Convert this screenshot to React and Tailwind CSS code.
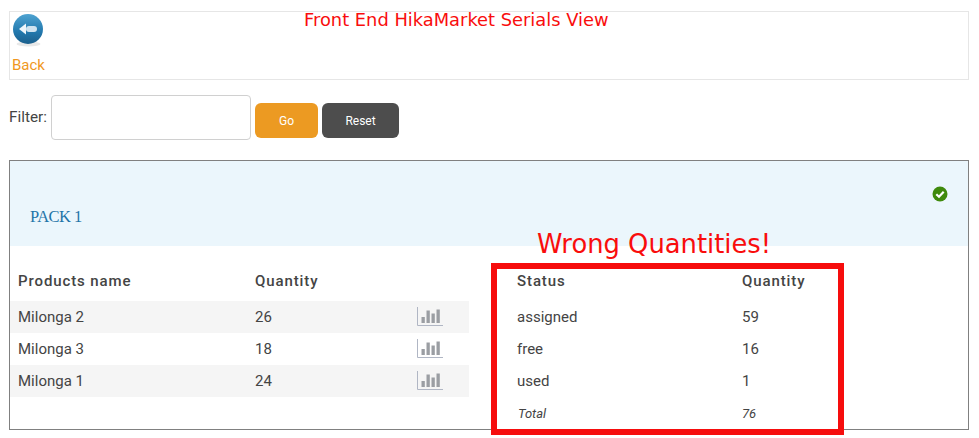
const font = "font-['Roboto',sans-serif]";

function BackIcon() {
  return (
    <svg width="32" height="34" viewBox="0 0 32 34" className="block">
      <defs>
        <linearGradient id="backFill" x1="0" y1="0" x2="0" y2="1">
          <stop offset="0" stopColor="#4fa3d1" />
          <stop offset="0.6" stopColor="#2278ad" />
          <stop offset="1" stopColor="#1b5f8c" />
        </linearGradient>
      </defs>
      <ellipse cx="15.5" cy="30" rx="12" ry="2.5" fill="#e8e8e8" />
      <circle cx="15" cy="15" r="15" fill="url(#backFill)" />
      <path d="M6 15 L13 9.5 L13 20.5 Z" fill="#eef6fb" />
      <rect x="13" y="12" width="11" height="6" rx="3" fill="#cfe3f0" />
    </svg>
  );
}

function ChartIcon() {
  return (
    <svg width="26" height="19" viewBox="0 0 26 19" className="-mt-[2px] block">
      <path d="M0.5 0 V18.5 H26" fill="none" stroke="#b0b6c4" strokeWidth="1" />
      <rect x="4.5" y="10" width="3.3" height="6" fill="#9b9ea3" />
      <rect x="9.5" y="3.5" width="3.3" height="12.5" fill="#9b9ea3" />
      <rect x="14.5" y="6.5" width="3.3" height="9.5" fill="#9b9ea3" />
      <rect x="19.5" y="2.5" width="3.3" height="13.5" fill="#9b9ea3" />
    </svg>
  );
}

function CheckIcon() {
  return (
    <svg width="16" height="16" viewBox="0 0 16 16" className="block">
      <circle cx="8" cy="8" r="7.5" fill="#3f8a0c" />
      <path d="M4.3 8.2 L7 10.8 L11.7 5.8" fill="none" stroke="#ffffff" strokeWidth="2.2" />
    </svg>
  );
}

const products = [
  { name: 'Milonga 2', qty: 26 },
  { name: 'Milonga 3', qty: 18 },
  { name: 'Milonga 1', qty: 24 },
];

const statuses = [
  { name: 'assigned', qty: 59 },
  { name: 'free', qty: 16 },
  { name: 'used', qty: 1 },
];

export default function App() {
  return (
    <div className={`relative h-[438px] w-[979px] overflow-hidden bg-white text-[#444] ${font}`}>
      {/* annotations added on top of the screenshot */}
      <div className="absolute left-[304px] top-[9px] font-['DejaVu_Sans',sans-serif] text-[17.85px] leading-[22px] whitespace-nowrap text-[#f90d0d]">
        Front End HikaMarket Serials View
      </div>
      <div className="absolute left-[537px] top-[229px] z-10 font-['DejaVu_Sans',sans-serif] text-[25.8px] leading-[30px] whitespace-nowrap text-[#f90d0d]">
        Wrong Quantities!
      </div>
      <div className="absolute left-[491px] top-[263px] z-10 h-[172px] w-[353px] border-[6px] border-[#f60d0d]" />

      <div className="pt-[11px] pl-[9px]">
        <div className="h-[69px] w-[960px] border border-[#e6e6e6] pt-[2px] pl-[3px]">
          <BackIcon />
          <div className="mt-[6px] -ml-[1px] text-[15px] leading-[22px] text-[#f0981e]">Back</div>
        </div>

        <div className="mt-[15px] flex h-[45px] items-center">
          <span className="mr-[4px] w-[38px] text-[15.3px] whitespace-nowrap">Filter:</span>
          <input className="h-[45px] w-[200px] rounded border border-[#d0d0d0] bg-white" />
          <div className="ml-[4px] mt-[6px] flex gap-[4px]">
            <button className="h-[35px] w-[63px] rounded-md bg-[#ec9a22] text-xs text-white">Go</button>
            <button className="h-[35px] w-[77px] rounded-md bg-[#4d4d4d] text-xs text-white">Reset</button>
          </div>
        </div>

        <div className="mt-[20px] h-[270px] w-[960px] border border-[#808080]">
          <div className="flex h-[85px] items-start justify-between bg-[#ebf6fc] pr-[20px] pl-[20px]">
            <div className="pt-[45px] font-['Liberation_Serif',serif] text-[16.5px] leading-[22px] tracking-[-0.5px] text-[#1f74a8]">
              PACK 1
            </div>
            <div className="pt-[25px]">
              <CheckIcon />
            </div>
          </div>

          <div className="flex">
            <div className="w-[459px]">
              <div className="flex h-[55px] items-center pt-[15px] pl-[8px] text-[15px] font-medium tracking-[0.9px]">
                <span className="w-[237px]">Products name</span>
                <span>Quantity</span>
              </div>
              {products.map((p, i) => (
                <div
                  key={p.name}
                  className={`flex h-[32px] items-center pl-[8px] text-[15px] ${i % 2 === 0 ? 'bg-[#f5f5f5]' : 'bg-white'}`}
                >
                  <span className="w-[237px] pt-[1px]">{p.name}</span>
                  <span className="w-[162px] pt-[1px]">{p.qty}</span>
                  <ChartIcon />
                </div>
              ))}
            </div>

            <div className="ml-[48px] flex-1">
              <div className="flex h-[55px] items-center pt-[15px] text-[15px] font-medium tracking-[0.9px]">
                <span className="w-[225px]">Status</span>
                <span>Quantity</span>
              </div>
              {statuses.map((s) => (
                <div key={s.name} className="flex h-[32px] items-center pt-[1px] text-[15px]">
                  <span className="w-[225px]">{s.name}</span>
                  <span>{s.qty}</span>
                </div>
              ))}
              <div className="flex h-[33px] items-center pl-[1px] text-[13px] italic">
                <span className="w-[224px]">Total</span>
                <span>76</span>
              </div>
            </div>
          </div>
        </div>
      </div>
    </div>
  );
}
